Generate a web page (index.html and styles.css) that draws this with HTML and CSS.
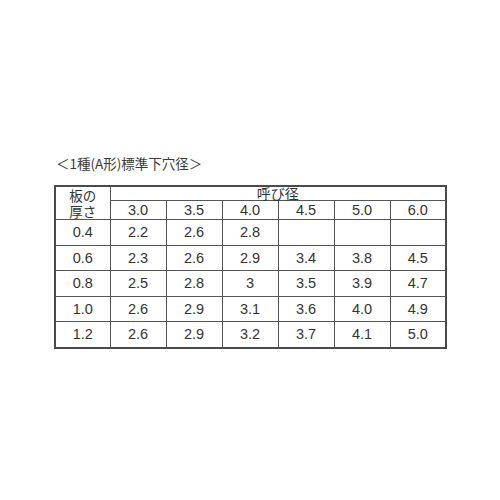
FILE: index.html
```html
<!DOCTYPE html>
<html lang="ja">
<head>
<meta charset="utf-8">
<link rel="stylesheet" href="styles.css">
</head>
<body>
<div class="page">
  <div class="title">＜1種(A形)標準下穴径＞</div>
  <table class="spec">
    <colgroup>
      <col class="c-first">
      <col class="c-n"><col class="c-n"><col class="c-n"><col class="c-n"><col class="c-n"><col class="c-n">
    </colgroup>
    <tr class="h1">
      <th rowspan="2" class="thick">板の<br>厚さ</th>
      <th colspan="6" class="group">呼び径</th>
    </tr>
    <tr class="h2">
      <th>3.0</th><th>3.5</th><th>4.0</th><th>4.5</th><th>5.0</th><th>6.0</th>
    </tr>
    <tr><td>0.4</td><td>2.2</td><td>2.6</td><td>2.8</td><td></td><td></td><td></td></tr>
    <tr><td>0.6</td><td>2.3</td><td>2.6</td><td>2.9</td><td>3.4</td><td>3.8</td><td>4.5</td></tr>
    <tr><td>0.8</td><td>2.5</td><td>2.8</td><td>3</td><td>3.5</td><td>3.9</td><td>4.7</td></tr>
    <tr><td>1.0</td><td>2.6</td><td>2.9</td><td>3.1</td><td>3.6</td><td>4.0</td><td>4.9</td></tr>
    <tr><td>1.2</td><td>2.6</td><td>2.9</td><td>3.2</td><td>3.7</td><td>4.1</td><td>5.0</td></tr>
  </table>
</div>
</body>
</html>
```

FILE: styles.css
```css
html, body {
  margin: 0;
  padding: 0;
  background: #ffffff;
}
body {
  width: 500px;
  height: 500px;
  font-family: "Liberation Sans", "Noto Sans CJK JP", sans-serif;
  color: #333333;
}
.page {
  padding: 154px 0 0 54px;
}
.title {
  font-family: "Noto Sans CJK JP", sans-serif;
  font-size: 13.5px;
  line-height: 18px;
  margin-left: 2px;
  letter-spacing: 0;
  color: #3a3a3a;
}
.spec {
  margin-top: 13px;
  border-collapse: collapse;
  table-layout: fixed;
  width: 391px;
  border: 2px solid #4a4a4a;
}
.c-first { width: 55px; }
.c-n { width: 56px; }
.spec th, .spec td {
  border: 1px solid #555555;
  padding: 0;
  text-align: center;
  font-weight: normal;
  font-size: 14.5px;
  color: #333333;
}
.spec th.thick {
  font-family: "Noto Sans CJK JP", sans-serif;
  font-size: 13.5px;
  line-height: 16px;
  vertical-align: middle;
}
.spec th.group {
  font-family: "Noto Sans CJK JP", sans-serif;
  font-size: 14px;
  line-height: 13px;
  height: 13px;
  text-align: center;
}
.h2 th {
  height: 18px;
  line-height: 18px;
}
.spec td {
  height: 24.5px;
  line-height: 24.5px;
}
```
